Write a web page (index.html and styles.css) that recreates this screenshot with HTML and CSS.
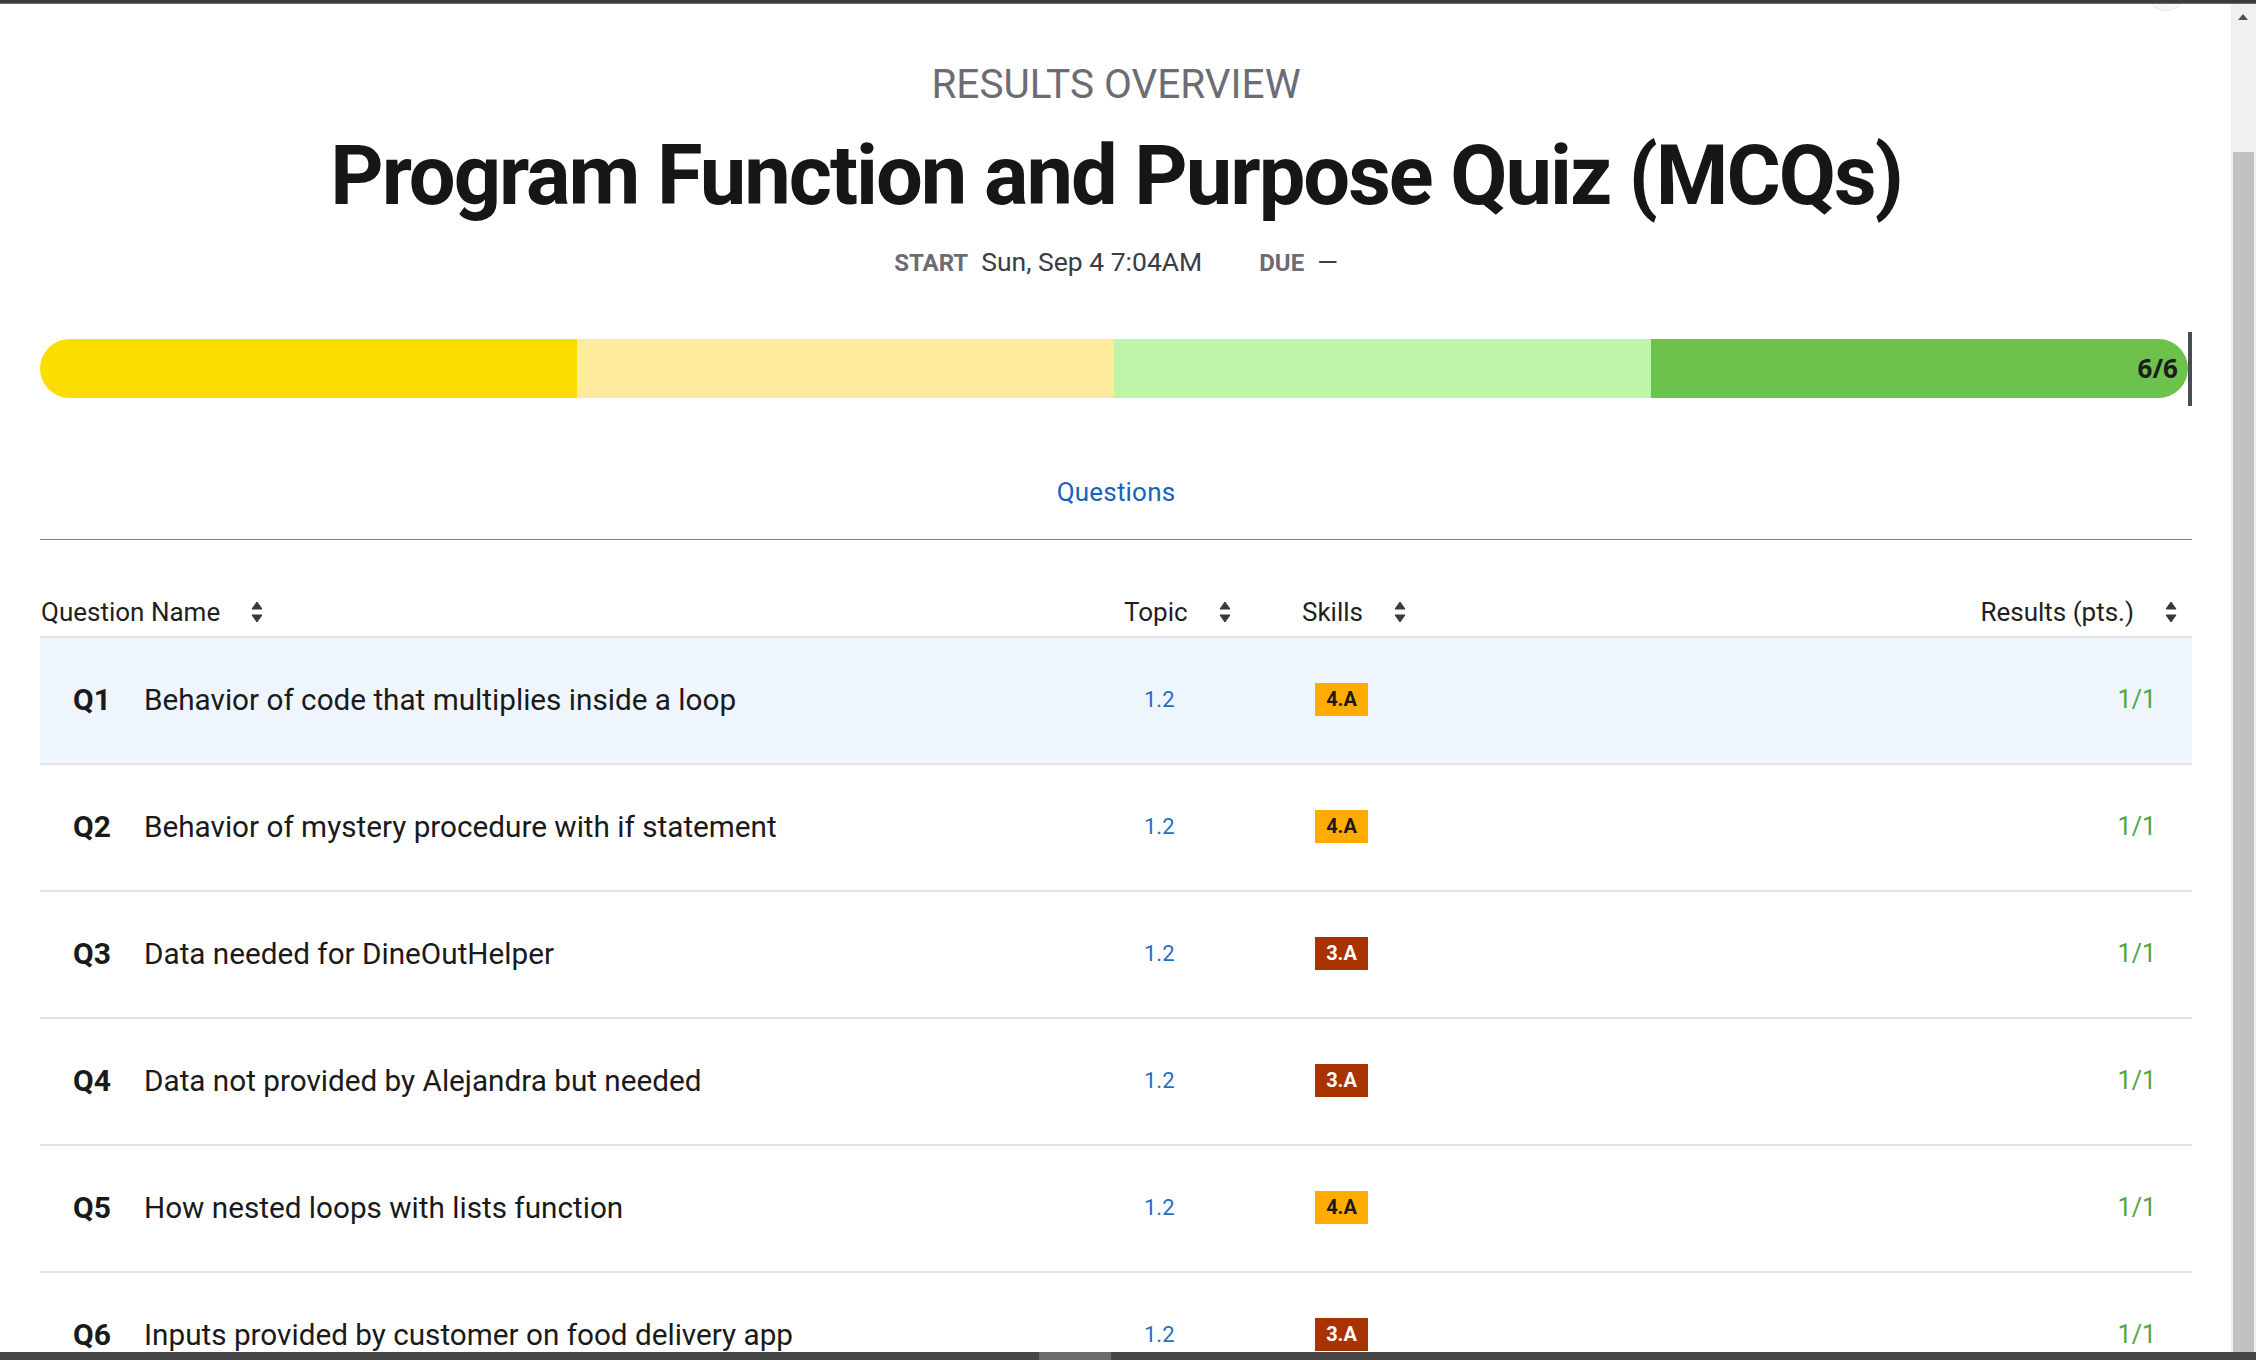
FILE: index.html
```html
<!DOCTYPE html>
<html lang="en">
<head>
<meta charset="utf-8">
<title>Results Overview</title>
<link rel="stylesheet" href="styles.css">
</head>
<body>
<div class="topline"></div>
<div class="corner-btn"></div>
<main class="page">
  <header class="hero">
    <div class="eyebrow">RESULTS OVERVIEW</div>
    <h1 class="title">Program Function and Purpose Quiz (MCQs)</h1>
    <div class="dates">
      <span class="lbl">START</span><span class="val">Sun, Sep 4 7:04AM</span>
      <span class="lbl due">DUE</span><span class="val">—</span>
    </div>
  </header>

  <div class="progress">
    <div class="seg seg1"></div>
    <div class="seg seg2"></div>
    <div class="seg seg3"></div>
    <div class="seg seg4"><span class="score">6/6</span></div>
    <div class="marker"></div>
  </div>

  <nav class="tabs"><span class="tab">Questions</span></nav>

  <section class="table">
    <div class="thead">
      <div class="th th-name">Question Name<svg class="sort" viewBox="0 0 12 22"><path d="M6 1 L11 8 H1 Z"/><path d="M6 21 L11 14 H1 Z"/></svg></div>
      <div class="th th-topic">Topic<svg class="sort" viewBox="0 0 12 22"><path d="M6 1 L11 8 H1 Z"/><path d="M6 21 L11 14 H1 Z"/></svg></div>
      <div class="th th-skill">Skills<svg class="sort" viewBox="0 0 12 22"><path d="M6 1 L11 8 H1 Z"/><path d="M6 21 L11 14 H1 Z"/></svg></div>
      <div class="th th-res">Results (pts.)<svg class="sort" viewBox="0 0 12 22"><path d="M6 1 L11 8 H1 Z"/><path d="M6 21 L11 14 H1 Z"/></svg></div>
    </div>

    <div class="row active">
      <div class="cell name"><span class="qn">Q1</span><span class="qt">Behavior of code that multiplies inside a loop</span></div>
      <div class="cell topic">1.2</div>
      <div class="cell skill"><span class="badge orange">4.A</span></div>
      <div class="cell res">1/1</div>
    </div>
    <div class="row">
      <div class="cell name"><span class="qn">Q2</span><span class="qt">Behavior of mystery procedure with if statement</span></div>
      <div class="cell topic">1.2</div>
      <div class="cell skill"><span class="badge orange">4.A</span></div>
      <div class="cell res">1/1</div>
    </div>
    <div class="row">
      <div class="cell name"><span class="qn">Q3</span><span class="qt">Data needed for DineOutHelper</span></div>
      <div class="cell topic">1.2</div>
      <div class="cell skill"><span class="badge red">3.A</span></div>
      <div class="cell res">1/1</div>
    </div>
    <div class="row">
      <div class="cell name"><span class="qn">Q4</span><span class="qt">Data not provided by Alejandra but needed</span></div>
      <div class="cell topic">1.2</div>
      <div class="cell skill"><span class="badge red">3.A</span></div>
      <div class="cell res">1/1</div>
    </div>
    <div class="row">
      <div class="cell name"><span class="qn">Q5</span><span class="qt">How nested loops with lists function</span></div>
      <div class="cell topic">1.2</div>
      <div class="cell skill"><span class="badge orange">4.A</span></div>
      <div class="cell res">1/1</div>
    </div>
    <div class="row">
      <div class="cell name"><span class="qn">Q6</span><span class="qt">Inputs provided by customer on food delivery app</span></div>
      <div class="cell topic">1.2</div>
      <div class="cell skill"><span class="badge red">3.A</span></div>
      <div class="cell res">1/1</div>
    </div>
  </section>
</main>

<div class="vscroll">
  <div class="vs-arrow"></div>
  <div class="vs-thumb"></div>
</div>
<div class="hscroll"><div class="hs-thumb"></div></div>
</body>
</html>
```

FILE: styles.css
```css
html, body {
  margin: 0;
  padding: 0;
  overflow: hidden;
  background: #ffffff;
}
body {
  font-family: Roboto, "Liberation Sans", Arial, sans-serif;
  color: #1b1b1b;
  height: 1360px;
}

.topline {
  position: fixed;
  top: 0; left: 0; right: 0;
  height: 3px;
  background: #3c3c3c;
  border-bottom: 1px solid #6a6a6a;
  z-index: 5;
}
.corner-btn {
  position: fixed;
  top: -29px;
  left: 2146px;
  width: 38px;
  height: 38px;
  border-radius: 50%;
  background: #f7f7f7;
  border: 1px solid #e6e6e6;
  z-index: 4;
}

.page {
  margin-right: 24px;
  padding: 0 40px;
}

/* hero */
.hero {
  padding-top: 60px;
  text-align: center;
}
.eyebrow {
  font-size: 40.5px;
  line-height: 48px;
  color: #6b6c75;
  font-weight: 400;
}
.title {
  margin: 16px 0 0;
  font-size: 83px;
  line-height: 104px;
  font-weight: 700;
  color: #161616;
  letter-spacing: -2px;
}
.dates {
  margin-top: 18px;
  display: flex;
  justify-content: center;
  align-items: baseline;
  font-size: 26px;
  line-height: 32px;
}
.lbl {
  font-size: 24px;
  font-weight: 700;
  color: #6b6c74;
  margin-right: 13px;
}
.lbl.due { margin-left: 57px; }
.val {
  color: #3b3c44;
  font-size: 26.5px;
}

/* progress */
.progress {
  margin-top: 60px;
  height: 59px;
  display: flex;
  align-items: center;
}
.seg {
  flex: 1;
  height: 59px;
}
.seg1 { background: #fddc00; border-radius: 30px 0 0 30px; }
.seg2 { background: #feeb9d; }
.seg3 { background: #bff5a9; }
.seg4 {
  background: #6cc24a;
  border-radius: 0 30px 30px 0;
  display: flex;
  align-items: center;
  justify-content: flex-end;
}
.score {
  font-family: "Open Sans", "Liberation Sans", sans-serif;
  font-weight: 700;
  font-size: 26px;
  color: #1c1c1c;
  padding-right: 10px;
  padding-bottom: 2px;
}
.marker {
  width: 4px;
  height: 74px;
  background: #4a4b55;
  flex: none;
}

/* tabs */
.tabs {
  margin-top: 78px;
  text-align: center;
  border-bottom: 1px solid #3f8fd8;
  padding-bottom: 31px;
}
.tab {
  display: inline-block;
  font-size: 26px;
  line-height: 32px;
  color: #1862bd;
  letter-spacing: 0.2px;
}

/* table */
.table {
  margin-top: 56px;
}
.thead, .row {
  display: grid;
  grid-template-columns: 1084px 178px 1fr 420px;
}
.thead {
  border-bottom: 2px solid #e2e4e8;
  padding-bottom: 8px;
}
.th {
  display: flex;
  align-items: center;
  font-size: 26px;
  line-height: 32px;
  color: #1f1f1f;
}
.th-name { padding-left: 1px; }
.th-res { justify-content: flex-end; padding-right: 15px; }
.sort {
  width: 12px;
  height: 22px;
  margin-left: 31px;
  fill: #3a3a3a;
  stroke: #3a3a3a;
  stroke-width: 1;
  stroke-linejoin: round;
}

.row {
  height: 125px;
  border-bottom: 2px solid #e4e4e4;
  align-items: center;
}
.row.active { background: #eef5fd; }
.cell {
  display: flex;
  align-items: center;
  margin-bottom: 2px;
}
.name { padding-left: 33px; }
.qn {
  width: 71px;
  flex: none;
  font-size: 30px;
  font-weight: 700;
  color: #1a1a1a;
}
.qt {
  font-size: 29.7px;
  color: #1a1a1a;
}
.topic {
  padding-left: 20px;
  font-size: 22px;
  color: #1f6fc4;
}
.skill { padding-left: 13px; }
.badge {
  display: inline-block;
  width: 53px;
  height: 33px;
  line-height: 33px;
  text-align: center;
  font-size: 20px;
  font-weight: 700;
}
.badge.orange { background: #ffab00; color: #1a1a1a; }
.badge.red { background: #a83200; color: #ffffff; }
.res {
  justify-content: flex-end;
  padding-right: 36px;
  font-size: 25px;
  color: #4fa645;
}

/* fake scrollbars */
.vscroll {
  position: fixed;
  top: 4px;
  right: 0;
  width: 25px;
  bottom: 8px;
  background: #f0f0f0;
  z-index: 6;
}
.vs-arrow {
  position: absolute;
  top: 10px;
  left: 7px;
  width: 0; height: 0;
  border-left: 5.5px solid transparent;
  border-right: 5.5px solid transparent;
  border-bottom: 6px solid #505050;
}
.vs-thumb {
  position: absolute;
  top: 148px;
  left: 2px;
  right: 2px;
  bottom: 0;
  background: #c1c1c1;
}
.hscroll {
  position: fixed;
  left: 0; right: 0; bottom: 0;
  height: 8px;
  background: #464646;
  z-index: 7;
}
.hs-thumb {
  position: absolute;
  left: 1039px;
  width: 72px;
  top: 0; bottom: 0;
  background: #6c6c6c;
}
```
